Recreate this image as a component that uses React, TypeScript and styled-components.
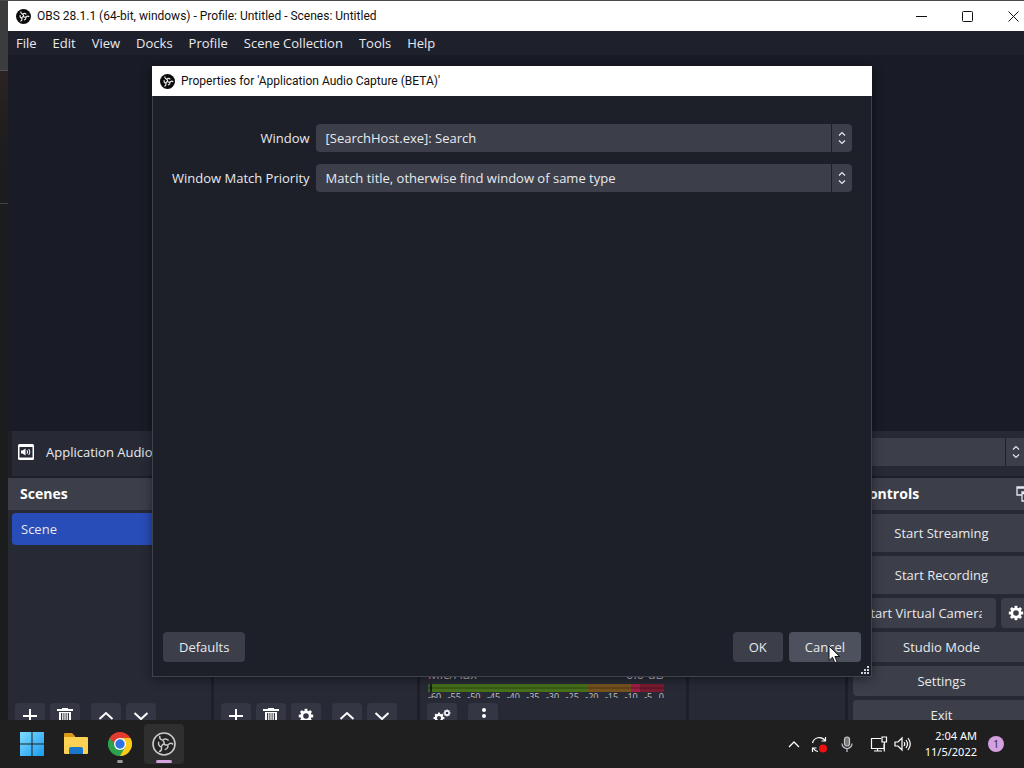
import React from "react";
import styled, { createGlobalStyle, css } from "styled-components";

const uiFont = `"Open Sans", "Noto Sans", sans-serif`;

const Global = createGlobalStyle`
  * { box-sizing: border-box; }
  html, body, #root { height: 100%; }
  body { margin: 0; overflow: hidden; background: #1b1c1c; font-family: ${uiFont}; font-size: 13px; color: #e8eaee; }
  button, select, input { font: inherit; color: inherit; }
`;

const Desktop = styled.div`
  position: relative;
  display: flex;
  flex-direction: column;
  height: 100vh;
  overflow: hidden;
  padding-top: 1px;
  background: linear-gradient(#4a4a4a 0 1px, transparent 1px),
    linear-gradient(#3a3c3d 0 70px, #55504e 70px 71px, #2b2322 71px, #1f1d1d 140px, #1b1c1c 203px, #444 203px 204px, #1b1c1c 204px);
`;

const MainWindow = styled.main`
  flex: 1;
  min-height: 0;
  display: flex;
  flex-direction: column;
  overflow: hidden;
  margin-left: 8px;
  margin-right: -12px;
  background: #1d1f29;
`;

const TitleBar = styled.header`
  flex: none;
  display: flex;
  align-items: center;
  gap: 6px;
  height: 30px;
  padding-left: 8px;
  background: #fff;
  color: #111;
`;

const TitleText = styled.h1`
  flex: 1;
  margin: 0;
  font-family: Roboto, sans-serif;
  font-size: 12px;
  font-weight: 400;
  line-height: 16px;
  white-space: nowrap;
`;

const CaptionButtons = styled.div`
  display: flex;
`;

const CaptionButton = styled.button`
  width: 46px;
  height: 30px;
  padding: 0;
  border: 0;
  background: none;
  display: grid;
  place-items: center;
`;

const MenuBar = styled.nav`
  flex: none;
  display: flex;
  gap: 16px;
  height: 24px;
  padding-left: 8px;
  background: #1e202b;
`;

const MenuItem = styled.button`
  padding: 0;
  border: 0;
  background: none;
  line-height: 24px;
  white-space: nowrap;
`;

const Preview = styled.section`
  flex: 1;
  background: #191b26;
`;

const SourceBar = styled.section`
  flex: none;
  display: flex;
  align-items: center;
  gap: 12px;
  height: 45px;
  margin: 0 4px 2px;
  padding: 0 6px 3px;
  background: #272a35;
`;

const SourceName = styled.span`
  flex: 1;
  white-space: nowrap;
`;

const Combo = styled.div<{ $width?: string }>`
  display: grid;
  width: ${(p) => p.$width ?? "100%"};
  height: 28px;
`;

const Select = styled.select`
  grid-area: 1 / 1;
  width: 100%;
  height: 28px;
  padding: 0 28px 0 10px;
  border: 0;
  border-radius: 4px;
  background: #3c3f4a;
  appearance: none;
`;

const ComboArrows = styled.span`
  grid-area: 1 / 1;
  justify-self: end;
  display: grid;
  place-items: center;
  width: 21px;
  height: 28px;
  border-left: 1px solid #1d1f29;
  pointer-events: none;
`;

const Docks = styled.div`
  flex: none;
  display: grid;
  grid-template-columns: 203px 203px 266px 156px minmax(0, 1fr);
  gap: 3px;
  height: 242px;
`;

const Dock = styled.section`
  display: flex;
  flex-direction: column;
  min-width: 0;
  overflow: hidden;
  background: #272a35;
`;

const DockHeader = styled.div`
  flex: none;
  display: flex;
  align-items: center;
  justify-content: space-between;
  height: 32px;
  padding: 0 6px 0 12px;
  background: #3c3f4a;
`;

const DockTitle = styled.h2`
  margin: 0;
  font-size: 14px;
  line-height: 20px;
  font-weight: 700;
  color: #fff;
  white-space: nowrap;
`;

const DockBody = styled.div`
  flex: 1;
  min-height: 0;
  padding: 3px 4px;
`;

const SceneItem = styled.button`
  width: 100%;
  height: 32px;
  padding: 0 9px;
  border: 0;
  border-radius: 4px;
  background: #284cb8;
  text-align: left;
`;

const Toolbar = styled.div`
  flex: none;
  display: flex;
  gap: 5px;
  height: 17px;
  padding: 0 7px;
`;

const ToolButton = styled.button`
  flex: none;
  display: grid;
  place-items: center;
  width: 30px;
  height: 26px;
  padding: 0;
  border: 0;
  border-radius: 4px;
  background: #343743;
  color: #fff;
`;

const ToolGap = styled.span`
  width: 1px;
`;

const MixerBody = styled.div`
  flex: 1;
  display: flex;
  flex-direction: column;
  justify-content: flex-end;
  padding: 0 22px 5px 8px;
`;

const MixerRow = styled.div`
  display: flex;
  justify-content: space-between;
  height: 18px;
  line-height: 16px;
  color: #b4b6bd;
`;

const Meter = styled.div`
  height: 8px;
  background: linear-gradient(transparent 3px, rgba(0, 0, 0, 0.2) 3px 5px, transparent 5px),
    linear-gradient(90deg, #39611f 0 2px, #1d1f29 2px 4px, #46701a 4px 160px, #75531f 160px 203px, #a01f45 203px 212px, #7a1b31 212px);
`;

const Scale = styled.div`
  display: flex;
  justify-content: space-between;
  height: 6px;
  overflow: hidden;
  font-size: 9px;
  line-height: 10px;
  color: #c3c5ca;
`;

const ControlList = styled.div`
  display: grid;
  gap: 4px;
  padding: 4px 6px 0 5px;
`;

const button = css`
  border: 0;
  border-radius: 4px;
  background: #3c3f4a;
  white-space: nowrap;
`;

const ControlButton = styled.button<{ $tall?: boolean }>`
  ${button}
  display: flex;
  justify-content: center;
  align-items: center;
  min-width: 0;
  height: ${(p) => (p.$tall ? 38 : 30)}px;
  padding: 0 14px;
`;

const ControlLabel = styled.span`
  display: flex;
  justify-content: center;
  min-width: 0;
  overflow: hidden;
`;

const CameraRow = styled.div`
  display: grid;
  grid-template-columns: minmax(0, 1fr) 29px;
  gap: 5px;
`;

const GearButton = styled.button`
  ${button}
  display: grid;
  place-items: center;
  padding: 0;
`;

const Dialog = styled.div`
  position: absolute;
  inset: 66px 152px 91px;
  display: flex;
  flex-direction: column;
  background: #1d1f29;
  box-shadow: inset 0 0 0 1px #41444d, 0 2px 10px rgba(0, 0, 0, 0.45);
`;

const Form = styled.div`
  flex: 1;
  display: grid;
  grid-template-columns: auto minmax(0, 1fr);
  grid-auto-rows: 28px;
  gap: 12px 6px;
  padding: 28px 20px 0;
`;

const Label = styled.label`
  text-align: right;
  line-height: 28px;
  white-space: nowrap;
`;

const DialogFooter = styled.div`
  display: flex;
  gap: 6px;
  padding: 0 11px;
`;

const DialogButton = styled.button<{ $hover?: boolean; $first?: boolean }>`
  ${button}
  height: 30px;
  padding: 0 16px;
  ${(p) => p.$first && "margin-right: auto;"}
  ${(p) => p.$hover && "background: #4d515d;"}
`;

const GripRow = styled.div`
  display: flex;
  justify-content: flex-end;
  height: 15px;
  padding: 4px 3px 0;
`;

const Pointer = styled.svg`
  position: absolute;
  right: 183px;
  bottom: 104px;
`;

const Taskbar = styled.footer`
  flex: none;
  display: flex;
  align-items: center;
  justify-content: space-between;
  height: 48px;
  padding: 0 20px 0 12px;
  background: #1f1f1f;
  color: #fff;
`;

const TaskGroup = styled.div`
  display: flex;
  align-items: center;
  gap: 4px;
`;

const TaskButton = styled.button<{ $active?: boolean }>`
  display: grid;
  grid-template-rows: 1fr 3px;
  justify-items: center;
  align-items: center;
  width: 40px;
  height: 40px;
  padding: 3px 0 1px;
  border: 0;
  border-radius: 4px;
  background: ${(p) => (p.$active ? "#2f2f2f" : "none")};
`;

const Indicator = styled.span<{ $wide?: boolean }>`
  width: ${(p) => (p.$wide ? 16 : 6)}px;
  height: 3px;
  border-radius: 2px;
  background: ${(p) => (p.$wide ? "#d3a5dc" : "#9a9a9a")};
`;

const Tray = styled.div`
  display: flex;
  align-items: center;
  gap: 11px;
`;

const QuickSettings = styled.button`
  display: flex;
  align-items: center;
  gap: 6px;
  padding: 0 2px 0 4px;
  border: 0;
  background: none;
`;

const Clock = styled.time`
  font-family: "Noto Sans", sans-serif;
  font-size: 11px;
  line-height: 16px;
  text-align: right;
  white-space: pre-line;
`;

const Badge = styled.span`
  display: grid;
  place-items: center;
  width: 16px;
  height: 16px;
  border-radius: 50%;
  background: #d3a0e0;
  color: #222;
  font-size: 10px;
`;

const ObsIcon = ({ size = 15, outlined = false }: { size?: number; outlined?: boolean }) => (
  <svg width={size} height={size} viewBox="0 0 24 24" aria-hidden="true">
    <circle cx="12" cy="12" r={outlined ? 11 : 12} fill={outlined ? "#242424" : "#0c0c0c"} stroke={outlined ? "#c9c9c9" : "none"} strokeWidth="1.6" />
    {[0, 120, 240].map((a) => (
      <path
        key={a}
        transform={`rotate(${a} 12 12)`}
        d="M12 12.5C12.800 9.600 11 8.300 9.400 7.600C7.900 6.900 7.400 5.400 7.800 3.800M10.600 8.200C12.500 6.800 15 6.900 16.600 8.600"
        fill="none"
        stroke={outlined ? "#c9c9c9" : "#f2f2f2"}
        strokeWidth={outlined ? 1.4 : 1.7}
      />
    ))}
  </svg>
);

const Arrows = () => (
  <ComboArrows>
    <svg width="8" height="14" viewBox="0 0 8 14" fill="none" stroke="#e6e8ee" strokeWidth="1.2">
      <path d="M1 4.5 4 1.5l3 3M1 9.5l3 3 3-3" />
    </svg>
  </ComboArrows>
);

const shapes: Record<string, React.ReactNode> = {
  plus: <path d="M8 1v14M1 8h14" />,
  up: <path d="m1.5 11 6.5-6 6.5 6" />,
  down: <path d="m1.5 5 6.5 6 6.5-6" />,
  trash: (
    <g fill="currentColor" stroke="none">
      <path d="M5 0h6v1h5v2H0V1h5z" />
      <path d="M2 4h12v12H2zM4 5v10h1.200V5zM6.400 5v10h1V5zM8.600 5v10h1V5zM10.800 5v10H12V5z" fillRule="evenodd" />
    </g>
  ),
  dots: (
    <g fill="currentColor" stroke="none">
      <circle cx="9" cy="2" r="2" />
      <circle cx="9" cy="8" r="2" />
      <circle cx="9" cy="14" r="2" />
    </g>
  ),
};

const Glyph = ({ name }: { name: string }) => (
  <svg width="16" height="16" viewBox="0 0 16 16" fill="none" stroke="currentColor" strokeWidth="2" aria-hidden="true">
    {shapes[name]}
  </svg>
);

const GearShape = ({ x = 8, y = 8, s = 1 }: { x?: number; y?: number; s?: number }) => (
  <g transform={`translate(${x} ${y}) scale(${s})`}>
    <circle r="4.2" fill="none" stroke="#fff" strokeWidth="2.8" />
    {[0, 45, 90, 135, 180, 225, 270, 315].map((a) => (
      <rect key={a} x="-1.4" y="-7.2" width="2.8" height="3" fill="#fff" transform={`rotate(${a})`} />
    ))}
  </g>
);

const Gear = () => (
  <svg width="16" height="16" viewBox="0 0 16 16" aria-hidden="true">
    <GearShape />
  </svg>
);

const Gears = () => (
  <svg width="18" height="16" viewBox="0 0 18 16" aria-hidden="true">
    <GearShape x={6} y={10} s={0.75} />
    <GearShape x={14} y={5} s={0.48} />
  </svg>
);

const Tool = ({ icon, label }: { icon: string; label: string }) => (
  <ToolButton aria-label={label}>{icon === "gear" ? <Gear /> : icon === "gears" ? <Gears /> : <Glyph name={icon} />}</ToolButton>
);

const menus = ["File", "Edit", "View", "Docks", "Profile", "Scene Collection", "Tools", "Help"];
const levels = [60, 55, 50, 45, 40, 35, 30, 25, 20, 15, 10, 5, 0];

export default function App() {
  return (
    <>
      <Global />
      <Desktop>
        <MainWindow>
          <TitleBar>
            <ObsIcon />
            <TitleText>OBS 28.1.1 (64-bit, windows) - Profile: Untitled - Scenes: Untitled</TitleText>
            <CaptionButtons>
              <CaptionButton aria-label="Minimize">
                <svg width="11" height="11" stroke="#111"><path d="M0 5.5h11" /></svg>
              </CaptionButton>
              <CaptionButton aria-label="Maximize">
                <svg width="11" height="11" stroke="#111" fill="none"><rect x=".5" y=".5" width="10" height="10" rx="1" /></svg>
              </CaptionButton>
              <CaptionButton aria-label="Close">
                <svg width="11" height="11" stroke="#111"><path d="M.5.5l10 10m0-10-10 10" /></svg>
              </CaptionButton>
            </CaptionButtons>
          </TitleBar>
          <MenuBar>
            {menus.map((m) => (
              <MenuItem key={m}>{m}</MenuItem>
            ))}
          </MenuBar>
          <Preview />
          <SourceBar>
            <svg width="16" height="16" viewBox="0 0 16 16" aria-hidden="true">
              <rect width="16" height="16" rx="1.5" fill="#fff" />
              <rect x="1.5" y="3" width="13" height="10.5" fill="#272a35" />
              <path d="M3 6.500h1.500L7.500 4.500v7L4.500 9.500H3z" fill="#fff" />
              <path d="M9 6.200q1.200 1.800 0 3.600M10.800 5q2.200 3 0 6" fill="none" stroke="#fff" />
            </svg>
            <SourceName>Application Audio Capture (BETA)</SourceName>
            <Combo $width="540px">
              <Select aria-label="Source window" defaultValue="">
                <option value=""></option>
              </Select>
              <Arrows />
            </Combo>
          </SourceBar>
          <Docks>
            <Dock>
              <DockHeader><DockTitle>Scenes</DockTitle></DockHeader>
              <DockBody><SceneItem>Scene</SceneItem></DockBody>
              <Toolbar>
                <Tool icon="plus" label="Add scene" />
                <Tool icon="trash" label="Remove scene" />
                <ToolGap />
                <Tool icon="up" label="Move scene up" />
                <Tool icon="down" label="Move scene down" />
              </Toolbar>
            </Dock>
            <Dock>
              <DockHeader><DockTitle>Sources</DockTitle></DockHeader>
              <DockBody />
              <Toolbar>
                <Tool icon="plus" label="Add source" />
                <Tool icon="trash" label="Remove source" />
                <Tool icon="gear" label="Source properties" />
                <ToolGap />
                <Tool icon="up" label="Move source up" />
                <Tool icon="down" label="Move source down" />
              </Toolbar>
            </Dock>
            <Dock>
              <DockHeader><DockTitle>Audio Mixer</DockTitle></DockHeader>
              <MixerBody>
                <MixerRow><span>Mic/Aux</span><span>0.0 dB</span></MixerRow>
                <Meter />
                <Scale>{levels.map((l) => <span key={l}>{l ? `-${l}` : l}</span>)}</Scale>
              </MixerBody>
              <Toolbar>
                <Tool icon="gears" label="Advanced audio properties" />
                <ToolGap />
                <Tool icon="dots" label="Mixer menu" />
              </Toolbar>
            </Dock>
            <Dock>
              <DockHeader><DockTitle>Scene Transitions</DockTitle></DockHeader>
            </Dock>
            <Dock>
              <DockHeader>
                <DockTitle>Controls</DockTitle>
                <svg width="14" height="16" viewBox="0 0 14 16" fill="none" stroke="#e6e8ee" strokeWidth="1.3" aria-hidden="true">
                  <path d="M6 9H1V1h12v5M1 2h12M6 6h8v9H6zM6 7.500h8" />
                </svg>
              </DockHeader>
              <ControlList>
                <ControlButton $tall>Start Streaming</ControlButton>
                <ControlButton $tall>Start Recording</ControlButton>
                <CameraRow>
                  <ControlButton><ControlLabel>Start Virtual Camera</ControlLabel></ControlButton>
                  <GearButton aria-label="Virtual camera settings"><Gear /></GearButton>
                </CameraRow>
                <ControlButton>Studio Mode</ControlButton>
                <ControlButton>Settings</ControlButton>
                <ControlButton>Exit</ControlButton>
              </ControlList>
            </Dock>
          </Docks>
        </MainWindow>

        <Taskbar>
          <TaskGroup>
            <TaskButton aria-label="Start">
              <svg width="24" height="24" viewBox="0 0 24 24">
                <defs>
                  <linearGradient id="win" x2="1" y2="1"><stop stopColor="#7fdcff" /><stop offset="1" stopColor="#1a9bf0" /></linearGradient>
                </defs>
                <path d="M0 0h11.500v11.500H0zM12.500 0H24v11.500H12.500zM0 12.500h11.500V24H0zM12.500 12.500H24V24H12.500z" fill="url(#win)" />
              </svg>
            </TaskButton>
            <TaskButton aria-label="File Explorer">
              <svg width="26" height="24" viewBox="0 0 26 24">
                <path d="M1 2q0-1 1-1h7l3 3v5H1z" fill="#d99a1c" />
                <path d="M1 5h23q1 0 1 1v15q0 1-1 1H2q-1 0-1-1z" fill="#fbd253" />
                <path d="M6 22v-5q0-2 2-2h10q2 0 2 2v5z" fill="#1a77c9" />
              </svg>
            </TaskButton>
            <TaskButton aria-label="Google Chrome">
              <svg width="24" height="24" viewBox="0 0 24 24">
                <path d="M12 12 1.600 6A12 12 0 0 1 22.400 6z" fill="#e33b2e" />
                <path d="M12 12 22.400 6A12 12 0 0 1 12 24z" fill="#fccb1c" />
                <path d="M12 12v12A12 12 0 0 1 1.600 6z" fill="#2da24c" />
                <path d="M12 24 17.200 15 12 12z" fill="#2da24c" />
                <path d="M22.400 6H12v6l5.200 3z" fill="#fccb1c" />
                <path d="M1.600 6 6.800 15 12 12V6z" fill="#e33b2e" />
                <path d="M1.600 6 6.800 15 7.500 12z" fill="#2da24c" />
                <circle cx="12" cy="12" r="6" fill="#fff" />
                <circle cx="12" cy="12" r="4.700" fill="#2f73e0" />
              </svg>
              <Indicator />
            </TaskButton>
            <TaskButton $active aria-label="OBS Studio">
              <ObsIcon size={24} outlined />
              <Indicator $wide />
            </TaskButton>
          </TaskGroup>
          <Tray>
            <svg width="12" height="8" fill="none" stroke="#fff" strokeWidth="1.3"><path d="m1 7 5-5 5 5" /></svg>
            <svg width="17" height="17" viewBox="0 0 17 17" fill="none" stroke="#fff" strokeWidth="1.2">
              <path d="M1.500 7A7 7 0 0 1 14 4.500M14.500 1v4h-4M1.500 16v-4h4M2 12a7 7 0 0 0 5 3.500" />
              <circle cx="12" cy="12.500" r="4" fill="#f01010" stroke="none" />
            </svg>
            <svg width="16" height="16" viewBox="0 0 16 16" fill="none" stroke="#c8c8d0" strokeWidth="1.2">
              <rect x="5.500" y="1" width="5" height="9" rx="2.500" fill="#777" /><path d="M3 7.500a5 5 0 0 0 10 0M8 12.500V16" />
            </svg>
            <QuickSettings aria-label="Network and volume">
              <svg width="18" height="16" viewBox="0 0 18 16" fill="none" stroke="#fff" strokeWidth="1.2">
                <path d="M11 2.500H1.500v10H14V8M7.500 12.500V15M4 15h8M12 1h4.500v5H12zM14.300 6v9.500" />
              </svg>
              <svg width="18" height="16" viewBox="0 0 18 16" fill="none" stroke="#fff" strokeWidth="1.2">
                <path d="M1 6h3l4-4v12l-4-4H1zM10 6q1.500 2 0 4M12 4q3 4 0 8M14 2q4.500 6 0 12" />
              </svg>
            </QuickSettings>
            <Clock>{"2:04 AM\n11/5/2022"}</Clock>
            <Badge>1</Badge>
          </Tray>
        </Taskbar>

        <Dialog role="dialog" aria-label="Properties">
          <TitleBar as="div">
            <ObsIcon />
            <TitleText as="h2">Properties for 'Application Audio Capture (BETA)'</TitleText>
          </TitleBar>
          <Form>
            <Label htmlFor="window">Window</Label>
            <Combo>
              <Select id="window"><option>[SearchHost.exe]: Search</option></Select>
              <Arrows />
            </Combo>
            <Label htmlFor="priority">Window Match Priority</Label>
            <Combo>
              <Select id="priority"><option>Match title, otherwise find window of same type</option></Select>
              <Arrows />
            </Combo>
          </Form>
          <DialogFooter>
            <DialogButton $first>Defaults</DialogButton>
            <DialogButton>OK</DialogButton>
            <DialogButton $hover>Cancel</DialogButton>
          </DialogFooter>
          <GripRow>
            <svg width="8" height="8" fill="#cfd1d6" aria-hidden="true">
              <path d="M6 0h2v2H6zM3 3h2v2H3zM6 3h2v2H6zM0 6h2v2H0zM3 6h2v2H3zM6 6h2v2H6z" />
            </svg>
          </GripRow>
        </Dialog>
        <Pointer width="13" height="19" viewBox="0 0 13 19" aria-hidden="true">
          <path d="M1 1v14.500l3.500-3.200 2.300 5.400 2.400-1-2.300-5.200h4.800z" fill="#fff" stroke="#111" />
        </Pointer>
      </Desktop>
    </>
  );
}
